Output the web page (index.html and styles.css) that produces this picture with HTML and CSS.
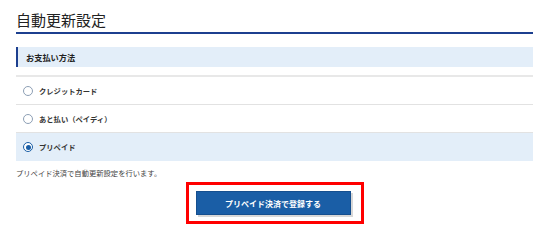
FILE: index.html
```html
<!DOCTYPE html>
<html lang="ja">

<head>
    <meta charset="UTF-8" />
    <title>自動更新設定</title>
    <link rel="stylesheet" href="styles.css">
</head>

<body>
    <div class="page">
        <h1 class="title">自動更新設定</h1>

        <div class="section-head">お支払い方法</div>

        <div class="options">
            <label class="option">
                <span class="radio"></span>
                <span>クレジットカード</span>
            </label>
            <label class="option">
                <span class="radio"></span>
                <span>あと払い（ペイディ）</span>
            </label>
            <label class="option selected">
                <span class="radio checked"></span>
                <span>プリペイド</span>
            </label>
        </div>

        <p class="note">プリペイド決済で自動更新設定を行います。</p>

        <div class="action">
            <div class="highlight">
                <button class="btn-submit">プリペイド決済で登録する</button>
            </div>
        </div>
    </div>
</body>

</html>
```

FILE: styles.css
```css
* {
    box-sizing: border-box;
    margin: 0;
    padding: 0;
    font-family: "Noto Sans CJK JP", "Noto Sans", sans-serif;
}

body {
    background-color: #fff;
    color: #222;
}

.page {
    width: 517px;
    margin-left: 16px;
}

.title {
    font-size: 15px;
    font-weight: normal;
    line-height: 20px;
    margin-top: 10px;
    padding-bottom: 2px;
    border-bottom: 2px solid #1c3f8f;
    color: #222;
}

.section-head {
    margin-top: 13px;
    height: 20px;
    line-height: 20px;
    background-color: #e3eef9;
    border-left: 2px solid #1c3f8f;
    padding-left: 8px;
    font-size: 8.2px;
    font-weight: bold;
}

.options {
    margin-top: 8px;
    border-top: 2px solid #e8e8e8;
}

.option {
    display: flex;
    align-items: center;
    height: 28px;
    padding-left: 7px;
    border-bottom: 1px solid #e2e2e2;
    font-size: 7.3px;
    font-weight: bold;
    color: #333;
}

.option.selected {
    background-color: #e3eef9;
    border-bottom: none;
}

.radio {
    width: 10px;
    height: 10px;
    border: 1px solid #8d9fb5;
    border-radius: 50%;
    background-color: #fff;
    margin-right: 6px;
    position: relative;
}

.radio.checked {
    border-color: #1a5ea6;
}

.radio.checked::after {
    content: "";
    position: absolute;
    left: 1.5px;
    top: 1.5px;
    width: 5px;
    height: 5px;
    border-radius: 50%;
    background-color: #1a5ea6;
}

.note {
    margin-top: 6px;
    font-size: 7.3px;
    line-height: 12px;
    color: #444;
}

.action {
    display: flex;
    justify-content: center;
    margin-top: 3px;
}

.highlight {
    border: 3px solid #ff0000;
    padding: 6px 10px 6px 7px;
}

.btn-submit {
    display: block;
    width: 155px;
    height: 24px;
    background-color: #1a5ea6;
    border: 1px solid #154f8f;
    color: #fff;
    font-size: 8px;
    font-weight: bold;
    box-shadow: 2px 2px 0 #d8d8d8;
}
```
